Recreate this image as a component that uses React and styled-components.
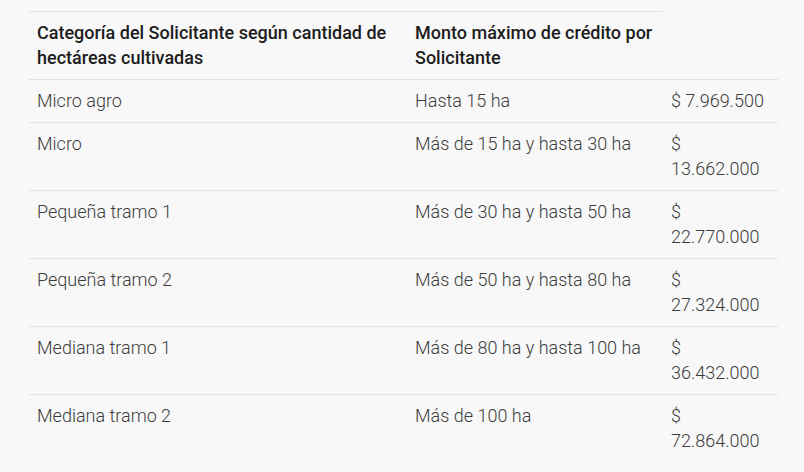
import React from 'react';
import styled, { createGlobalStyle } from 'styled-components';

const GlobalStyle = createGlobalStyle`
  html, body {
    margin: 0;
    padding: 0;
    background: #f8f8f8;
  }
  body {
    font-family: Roboto, "Liberation Sans", sans-serif;
  }
`;

const Page = styled.div`
  padding: 11px 0 0 29px;
  width: 804px;
  height: 472px;
  box-sizing: border-box;
  overflow: hidden;
`;

const Table = styled.table`
  border-collapse: collapse;
  table-layout: fixed;
  width: 749px;
  font-size: 18px;
  line-height: 25px;
`;

const HeadCell = styled.th`
  text-align: left;
  vertical-align: top;
  font-weight: 500;
  color: #1c1c1c;
  padding: 8px 8px 9px;
  border-top: 1px solid #e2e2e2;
`;

const Cell = styled.td`
  vertical-align: top;
  font-weight: 300;
  color: #3c3c3c;
  padding: 8px 8px 9px;
  border-top: 1px solid #e2e2e2;
`;

const rows = [
  ['Micro agro', 'Hasta 15 ha', '$ 7.969.500'],
  ['Micro', 'Más de 15 ha y hasta 30 ha', '$ 13.662.000'],
  ['Pequeña tramo 1', 'Más de 30 ha y hasta 50 ha', '$ 22.770.000'],
  ['Pequeña tramo 2', 'Más de 50 ha y hasta 80 ha', '$ 27.324.000'],
  ['Mediana tramo 1', 'Más de 80 ha y hasta 100 ha', '$ 36.432.000'],
  ['Mediana tramo 2', 'Más de 100 ha', '$ 72.864.000'],
];

export default function App() {
  return (
    <Page>
      <GlobalStyle />
      <Table>
        <colgroup>
          <col style={{ width: 378 }} />
          <col style={{ width: 256 }} />
          <col style={{ width: 115 }} />
        </colgroup>
        <thead>
          <tr>
            <HeadCell>Categoría del Solicitante según cantidad de hectáreas cultivadas</HeadCell>
            <HeadCell>Monto máximo de crédito por Solicitante</HeadCell>
          </tr>
        </thead>
        <tbody>
          {rows.map((r) => (
            <tr key={r[0]}>
              <Cell>{r[0]}</Cell>
              <Cell>{r[1]}</Cell>
              <Cell>{r[2]}</Cell>
            </tr>
          ))}
        </tbody>
      </Table>
    </Page>
  );
}
